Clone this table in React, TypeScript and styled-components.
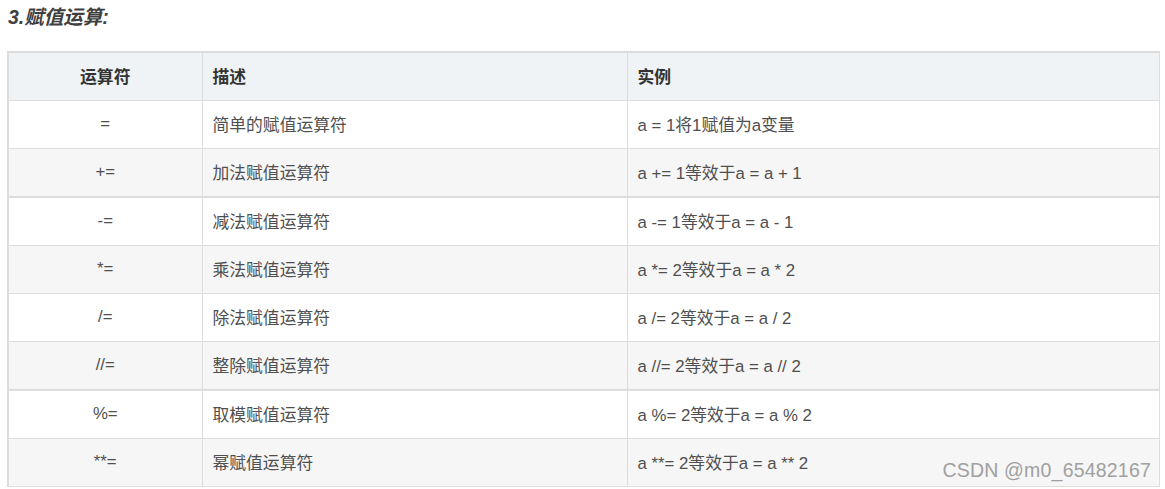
import React from 'react'
import styled, {createGlobalStyle} from 'styled-components'

const GlobalStyle = createGlobalStyle`
    html, body {
        margin: 0;
        padding: 0;
        background: #fff;
    }
    body {
        font-family: "Liberation Sans", "Noto Sans CJK SC", sans-serif;
    }
`

const rows = [
    {op: '=', desc: '简单的赋值运算符', example: 'a = 1将1赋值为a变量'},
    {op: '+=', desc: '加法赋值运算符', example: 'a += 1等效于a = a + 1'},
    {op: '-=', desc: '减法赋值运算符', example: 'a -= 1等效于a = a - 1'},
    {op: '*=', desc: '乘法赋值运算符', example: 'a *= 2等效于a = a * 2'},
    {op: '/=', desc: '除法赋值运算符', example: 'a /= 2等效于a = a / 2'},
    {op: '//=', desc: '整除赋值运算符', example: 'a //= 2等效于a = a // 2'},
    {op: '%=', desc: '取模赋值运算符', example: 'a %= 2等效于a = a % 2'},
    {op: '**=', desc: '幂赋值运算符', example: 'a **= 2等效于a = a ** 2'},
]

const Page = styled.div`
    position: relative;
    width: 1165px;
    height: 489px;
    padding: 0 0 0 7px;
    box-sizing: border-box;
    overflow: hidden;
`

const Title = styled.h3`
    margin: 0;
    padding: 4px 0 0 1px;
    height: 51px;
    box-sizing: border-box;
    font-size: 19.5px;
    line-height: 26px;
    font-weight: bold;
    font-style: italic;
    color: #3f3f3f;
`

const Table = styled.table`
    width: 1153px;
    border-collapse: collapse;
    table-layout: fixed;
    border-top: 2px solid #dcdcdc;
    border-left: 2px solid #dcdcdc;
    font-size: 16.8px;
    color: #4f4f4f;
`

const Row = styled.tr<{ $striped?: boolean; $thick?: boolean }>`
    background: ${(p) => (p.$striped ? '#f6f6f6' : '#fff')};
    border-top: ${(p) => (p.$thick ? '2px' : '1px')} solid #dddddd;
`

const HeadRow = styled.tr`
    background: #eff3f5;
`

const Th = styled.th<{ $center?: boolean }>`
    height: 45px;
    padding: 0 10px 2px;
    border-right: 1px solid #dddddd;
    border-bottom: 1px solid #dddddd;
    font-weight: bold;
    color: #333;
    text-align: ${(p) => (p.$center ? 'center' : 'left')};
`

const Td = styled.td<{ $center?: boolean }>`
    height: 45px;
    padding: 0 10px 2px;
    border-right: 1px solid #dddddd;
    border-bottom: 1px solid #dddddd;
    text-align: ${(p) => (p.$center ? 'center' : 'left')};
    white-space: nowrap;
`

const Watermark = styled.div`
    position: absolute;
    right: 14px;
    bottom: 7px;
    font-size: 19.5px;
    color: #a0a0a0;
    letter-spacing: 0.2px;
`

export default function App() {
    return (
        <Page>
            <GlobalStyle/>
            <Title>3.赋值运算:</Title>
            <Table>
                <colgroup>
                    <col style={{width: 194}}/>
                    <col style={{width: 425}}/>
                    <col/>
                </colgroup>
                <thead>
                    <HeadRow>
                        <Th $center>运算符</Th>
                        <Th>描述</Th>
                        <Th>实例</Th>
                    </HeadRow>
                </thead>
                <tbody>
                    {rows.map((r, i) => (
                        <Row key={r.op} $striped={i % 2 === 1} $thick={i === 2 || i === 6}>
                            <Td $center>{r.op}</Td>
                            <Td>{r.desc}</Td>
                            <Td>{r.example}</Td>
                        </Row>
                    ))}
                </tbody>
            </Table>
            <Watermark>CSDN @m0_65482167</Watermark>
        </Page>
    )
}
